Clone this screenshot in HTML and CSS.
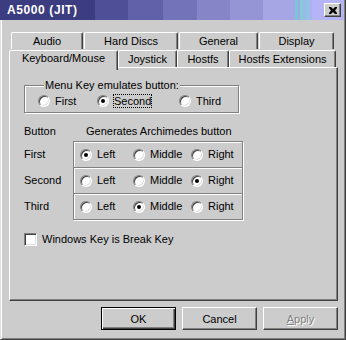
FILE: index.html
```html
<!DOCTYPE html>
<html lang="en">
<head>
    <meta charset="UTF-8">
    <meta name="viewport" content="width=device-width, initial-scale=1.0">
    <title>A5000 (JIT)</title>
    <link rel="stylesheet" href="styles.css">
</head>
<body>
    <!-- Settings dialog -->
    <div class="window">
        <div class="titlebar">
            <span class="title">A5000 (JIT)</span>
            <button class="close" aria-label="Close">
                <svg width="8" height="7" viewBox="0 0 8 7">
                    <path d="M0 0h2l2 2 2-2h2v1l-2 2.5 2 2.5v1h-2l-2-2-2 2h-2v-1l2-2.5-2-2.5z" fill="#000"/>
                </svg>
            </button>
        </div>

        <div class="dialog-body">
            <!-- Tabs -->
            <div class="tabs">
                <div class="tab-row back">
                    <div class="tab t-audio">Audio</div>
                    <div class="tab t-discs">Hard Discs</div>
                    <div class="tab t-general">General</div>
                    <div class="tab t-display">Display</div>
                </div>
                <div class="tab-row front">
                    <div class="tab t-keyboard active">Keyboard/Mouse</div>
                    <div class="tab t-joystick">Joystick</div>
                    <div class="tab t-hostfs">Hostfs</div>
                    <div class="tab t-hostext">Hostfs Extensions</div>
                </div>
            </div>

            <!-- Page -->
            <div class="panel">
                <fieldset class="group">
                    <legend>Menu Key emulates button:</legend>
                    <div class="menu-options">
                        <div class="option"><span class="radio"></span><span>First</span></div>
                        <div class="option"><span class="radio on"></span><span class="focus">Second</span></div>
                        <div class="option"><span class="radio"></span><span>Third</span></div>
                    </div>
                </fieldset>

                <div class="map-head">
                    <span>Button</span>
                    <span>Generates Archimedes button</span>
                </div>

                <div class="map">
                    <div class="map-labels">
                        <div class="map-label">First</div>
                        <div class="map-label">Second</div>
                        <div class="map-label">Third</div>
                    </div>
                    <div class="map-box">
                        <div class="map-row">
                            <div class="option"><span class="radio on"></span><span>Left</span></div>
                            <div class="option"><span class="radio"></span><span>Middle</span></div>
                            <div class="option"><span class="radio"></span><span>Right</span></div>
                        </div>
                        <div class="map-row">
                            <div class="option"><span class="radio"></span><span>Left</span></div>
                            <div class="option"><span class="radio"></span><span>Middle</span></div>
                            <div class="option"><span class="radio on"></span><span>Right</span></div>
                        </div>
                        <div class="map-row">
                            <div class="option"><span class="radio"></span><span>Left</span></div>
                            <div class="option"><span class="radio on"></span><span>Middle</span></div>
                            <div class="option"><span class="radio"></span><span>Right</span></div>
                        </div>
                    </div>
                </div>

                <div class="check-line">
                    <span class="checkbox"></span>
                    <span>Windows Key is Break Key</span>
                </div>
            </div>

            <!-- Dialog buttons -->
            <div class="actions">
                <button class="btn default">OK</button>
                <button class="btn">Cancel</button>
                <button class="btn disabled"><u>A</u>pply</button>
            </div>
        </div>
    </div>
</body>
</html>
```

FILE: styles.css
```css
/* Base */
* {
    box-sizing: border-box;
}

body {
    margin: 0;
    padding: 0;
    font-family: 'Liberation Sans', Arial, sans-serif;
    font-size: 11px;
    line-height: 13px;
    color: #000;
    background: #cccccc;
}

/* Window frame */
.window {
    width: 346px;
    height: 340px;
    background: #cccccc;
    border-left: 1px solid #dfdfdf;
    border-right: 1px solid #404040;
    border-bottom: 1px solid #404040;
    box-shadow:
        inset 1px 0 #fff,
        inset -1px -1px #808080;
    padding: 0 1px 1px 1px;
}

.titlebar {
    height: 20px;
    display: flex;
    align-items: center;
    justify-content: space-between;
    padding: 0 3px 0 7px;
    margin-left: -2px;
    background: linear-gradient(90deg,
        #3c3c80 0 95px,
        #4f4f98 95px 128px,
        #6161a9 128px 163px,
        #7373b9 163px 197px,
        #8585c8 197px 230px,
        #9595d6 230px 263px,
        #a6a6e5 263px 295px,
        #7ac6d6 295px 298px,
        #a0a8ea 298px 300px,
        #84ccd4 300px 303px,
        #9ab8ea 303px 306px,
        #8ac8e0 306px 309px,
        #aab2f0 309px 312px,
        #b4b4f6 312px);
}

.title {
    color: #fff;
    font-weight: bold;
    font-size: 12px;
    letter-spacing: 0.6px;
}

.close {
    width: 17px;
    height: 14px;
    padding: 0;
    display: flex;
    align-items: center;
    justify-content: center;
    background: #cccccc;
    border: 1px solid;
    border-color: #fff #404040 #404040 #fff;
    box-shadow: inset -1px -1px #808080;
}

/* Body */
.dialog-body {
    padding: 12px 6px 0 7px;
}

/* Tabs */
.tab-row {
    display: flex;
}

.tab-row.back {
    height: 17px;
    padding-left: 2px;
    gap: 1px;
}

.tab-row.front {
    height: 18px;
}

.tab {
    height: 17px;
    text-align: center;
    line-height: 16px;
    background: #cccccc;
    border-top: 1px solid #fff;
    border-left: 1px solid #fff;
    border-right: 1px solid #404040;
    border-radius: 2px 2px 0 0;
    box-shadow: inset -1px 0 #808080;
}

.tab-row.front .tab {
    margin-top: 1px;
}

.tab.active {
    position: relative;
    z-index: 1;
    height: 20px;
    margin-top: -1px;
    line-height: 15px;
}

.t-audio { width: 72px; }
.t-discs { width: 94px; }
.t-general { width: 79px; }
.t-display { width: 75px; }
.t-keyboard { width: 109px; }
.t-joystick { width: 59px; }
.t-hostfs { width: 52px; }
.t-hostext { width: 107px; }

/* Page panel */
.panel {
    height: 234px;
    border: 1px solid;
    border-color: #fff #404040 #404040 #fff;
    box-shadow: inset -1px -1px #808080;
    padding: 11px 0 0 14px;
}

.group {
    width: 215px;
    height: 34px;
    margin: 0;
    padding: 2px 0 0 13px;
    border: 1px solid #808080;
    box-shadow:
        inset 1px 1px #fff,
        1px 1px #fff;
}

.group legend {
    padding: 0 1px;
    margin-left: 6px;
    background: #cccccc;
}

.menu-options {
    display: grid;
    grid-template-columns: 59px 82px auto;
}

.option {
    display: flex;
    align-items: center;
    gap: 5px;
    height: 14px;
}

.focus {
    border: 1px dotted #000;
    margin: 0 -1px;
    line-height: 12px;
}

/* Radio and check boxes */
.radio {
    position: relative;
    flex: none;
    width: 12px;
    height: 12px;
    border-radius: 50%;
    border: 1px solid;
    border-color: #808080 #fff #fff #808080;
    background: #fff;
    box-shadow:
        inset 1px 1px #404040,
        inset -1px -1px #dfdfdf;
}

.radio.on::after {
    content: '';
    position: absolute;
    left: 3px;
    top: 3px;
    width: 4px;
    height: 4px;
    border-radius: 50%;
    background: #000;
}

.checkbox {
    flex: none;
    width: 13px;
    height: 13px;
    border: 1px solid;
    border-color: #808080 #fff #fff #808080;
    background: #fff;
    box-shadow:
        inset 1px 1px #404040,
        inset -1px -1px #dfdfdf;
}

/* Button mapping */
.map-head {
    display: grid;
    grid-template-columns: 62px auto;
    margin-top: 12px;
    height: 13px;
}

.map {
    display: flex;
    margin-top: 3px;
}

.map-labels {
    width: 49px;
}

.map-label {
    height: 26px;
    display: flex;
    align-items: center;
    padding-top: 1px;
}

.map-box {
    width: 170px;
    border: 1px solid #808080;
    box-shadow:
        inset 1px 1px #fff,
        1px 1px #fff;
}

.map-row {
    height: 25px;
    display: grid;
    grid-template-columns: 53px 58px auto;
    align-items: center;
    padding-left: 6px;
}

.map-row + .map-row {
    height: 26px;
    border-top: 1px solid #808080;
    box-shadow: inset 0 1px #fff;
}

.check-line {
    display: flex;
    align-items: center;
    gap: 5px;
    margin-top: 13px;
}

/* Dialog buttons */
.actions {
    display: flex;
    justify-content: flex-end;
    gap: 6px;
    margin-top: 6px;
}

.btn {
    width: 75px;
    height: 23px;
    padding: 0;
    font-family: inherit;
    font-size: 11px;
    color: #000;
    background: #cccccc;
    border: 1px solid;
    border-color: #fff #404040 #404040 #fff;
    box-shadow: inset -1px -1px #808080;
}

.btn.default {
    border: 1px solid #000;
    box-shadow:
        inset 1px 1px #fff,
        inset -1px -1px #404040,
        inset -2px -2px #808080;
}

.btn.disabled {
    color: #808080;
    text-shadow: 1px 1px #fff;
}
```
